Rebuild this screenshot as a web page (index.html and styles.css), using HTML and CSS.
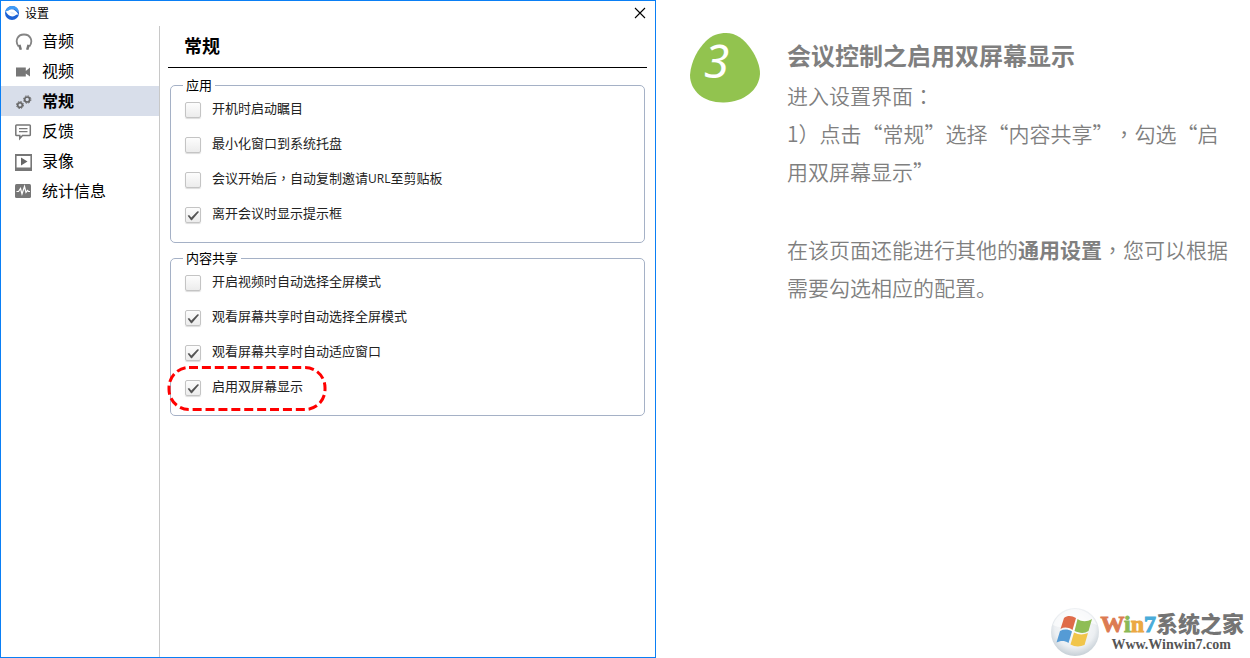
FILE: index.html
```html
<!DOCTYPE html>
<html lang="zh-CN">
<head>
<meta charset="utf-8">
<title>设置</title>
<link rel="stylesheet" href="styles.css">
</head>
<body>
<div class="page">
  <section class="window">
    <header class="titlebar">
      <svg class="app-icon" viewBox="0 0 14 14" aria-hidden="true">
        <circle cx="7" cy="7" r="7" fill="#1c62d6"/>
        <path d="M0.300 5.500C1 2.500 4 0 7.200 0 10 0 12.500 1.600 13.500 4.200L12.500 6C11 3.500 7.500 2 4.500 4 3 5 1.500 5.500 0.300 5.500Z" fill="#3f9bf5"/>
        <path d="M0.500 5C2 5.600 3.200 4.600 4.300 4 7.600 2.200 11 4.200 13.400 8.600 12.200 8.200 11 8.900 9.800 9.700 6.500 11.600 2.600 9.500 0.500 5Z" fill="#fff"/>
        <path d="M5 6C7.500 5.200 9.200 6.400 10.300 8.500 8 9.200 6 8.300 5 6Z" fill="#e4effc"/>
      </svg>
      <h1 class="window-title">设置</h1>
      <button class="close" type="button" aria-label="关闭">
        <svg viewBox="0 0 12 12" width="12" height="12"><path d="M1 1 11 11M11 1 1 11" stroke="#000" stroke-width="1.100" fill="none"/></svg>
      </button>
    </header>
    <div class="window-body">
      <nav class="sidebar">
        <a class="nav-item" href="#audio">
          <svg class="nav-icon" viewBox="0 0 18 18"><path d="M3.600 13.500C-0.500 8 2.500 1.500 9 1.500S18.500 8 14.400 13.500" fill="none" stroke="#858585" stroke-width="1.800"/><path d="M3 12.200 5.600 11.400 7 16.400 4.600 17ZM15 12.200 12.400 11.400 11 16.400 13.400 17Z" fill="#777"/></svg>
          <span>音频</span></a>
        <a class="nav-item" href="#video">
          <svg class="nav-icon" viewBox="0 0 18 18"><path d="M1 4.500H10.800V13.500H1ZM10.800 8 15 4.500V13.500L10.800 10.500Z" fill="#777"/></svg>
          <span>视频</span></a>
        <a class="nav-item active" href="#general" aria-current="page">
          <svg class="nav-icon" viewBox="0 0 18 18"><g fill="none" stroke="#666"><circle cx="5" cy="12" r="2.300" stroke-width="1.600"/><circle cx="5" cy="12" r="3.500" stroke-width="1" stroke-dasharray="1.600 1.150"/><circle cx="12.200" cy="6.500" r="2.500" stroke-width="1.700"/><circle cx="12.200" cy="6.500" r="3.700" stroke-width="1" stroke-dasharray="1.600 1.300"/></g></svg>
          <span>常规</span></a>
        <a class="nav-item" href="#feedback">
          <svg class="nav-icon" viewBox="0 0 18 18"><path d="M2 2H14.500Q15.300 2 15.300 2.800V11.700Q15.300 12.500 14.500 12.500H7.500L4.800 15.500V12.500H1.600Q0.800 12.500 0.800 11.700V2.800Q0.800 2 1.600 2Z" fill="none" stroke="#777" stroke-width="1.500"/><path d="M4 5.600H12.500M4 8.700H12.500" stroke="#777" stroke-width="1.300"/></svg>
          <span>反馈</span></a>
        <a class="nav-item" href="#record">
          <svg class="nav-icon" viewBox="0 0 18 18"><path d="M0 1H17V18H0ZM1.600 3V14.500H15.400V3Z" fill="#777" fill-rule="evenodd"/><path d="M6 4.500 12.500 8.500 6 12.500Z" fill="#666"/></svg>
          <span>录像</span></a>
        <a class="nav-item" href="#stats">
          <svg class="nav-icon" viewBox="0 0 18 18"><rect x="0" y="1" width="16" height="14" rx="1.500" fill="#777"/><path d="M1.500 8.500H3.500L5.500 5.500 7 11 9.500 3.500 11 9.500 12.500 7.500 13.500 8.500H15" fill="none" stroke="#fff" stroke-width="1.200"/></svg>
          <span>统计信息</span></a>
      </nav>
      <main class="settings">
        <h2 class="settings-title">常规</h2>
        <fieldset class="group">
          <legend>应用</legend>
          <label class="option"><input type="checkbox"><span class="caption">开机时启动瞩目</span></label>
          <label class="option"><input type="checkbox"><span class="caption">最小化窗口到系统托盘</span></label>
          <label class="option"><input type="checkbox"><span class="caption">会议开始后<span class="mid" lang="zh-TW">，</span>自动复制邀请<span class="abbr">URL</span>至剪贴板</span></label>
          <label class="option"><input type="checkbox" checked><span class="caption">离开会议时显示提示框</span></label>
        </fieldset>
        <fieldset class="group">
          <legend>内容共享</legend>
          <label class="option"><input type="checkbox"><span class="caption">开启视频时自动选择全屏模式</span></label>
          <label class="option"><input type="checkbox" checked><span class="caption">观看屏幕共享时自动选择全屏模式</span></label>
          <label class="option"><input type="checkbox" checked><span class="caption">观看屏幕共享时自动适应窗口</span></label>
          <label class="option"><input type="checkbox" checked><span class="caption">启用双屏幕显示</span>
            <svg class="callout" viewBox="0 0 160 47" aria-hidden="true"><rect x="2" y="2.500" width="156" height="42" rx="20" fill="none" stroke="#f00" stroke-width="3" stroke-dasharray="9 3.900"/></svg>
          </label>
        </fieldset>
      </main>
    </div>
  </section>

  <aside class="guide">
    <div class="step">
      <div class="badge">
        <svg class="blob" viewBox="0 0 70 70" aria-hidden="true"><path d="M36 0C46 0 54 6 61 16 67 25 70 33 70 41 69 57 54 69 34 69.500 14 70 0 58 0 42 1 28 8 16 16 8 22 2 29 0 36 0Z" fill="#92c34f"/></svg>
        <span class="number">3</span>
      </div>
      <article class="copy">
        <h2>会议控制之启用双屏幕显示</h2>
        <p>进入设置界面<span class="mid" lang="zh-TW">：</span><br>1）点击“常规”选择“内容共享”<span class="mid" lang="zh-TW">，</span>勾选“启用双屏幕显示”</p>
        <p>在该页面还能进行其他的<strong>通用设置</strong><span class="mid" lang="zh-TW">，</span>您可以根据需要勾选相应的配置。</p>
      </article>
    </div>
    <footer class="brand">
      <svg class="orb" viewBox="0 0 50 50" aria-hidden="true">
        <defs><radialGradient id="orb" cx=".5" cy=".4" r=".6"><stop offset="0" stop-color="#fff"/><stop offset=".7" stop-color="#eceff2"/><stop offset="1" stop-color="#c6cfd6"/></radialGradient></defs>
        <circle cx="25" cy="25" r="24" fill="url(#orb)"/>
        <path d="M3 18C8 5 20 2 25 2S42 5 47 18C34 12 16 25 3 18Z" fill="#fff" opacity=".6"/>
        <path d="M14 11C18 8 22 9 26 11L22.500 23C18 20 14 20 10.500 22Z" fill="#df6b49"/>
        <path d="M27.500 12C32 15 37 15 42 12L38.500 24C34 27 29 26 24.500 24Z" fill="#8fbd55"/>
        <path d="M10 24C14 22 18 22 22 24.500L18.500 36C14 33 10 34 6.500 35.500Z" fill="#559bd5"/>
        <path d="M24 25.500C29 28 33 28 38 26L34.500 38C30 40 25 40 20.500 37.500Z" fill="#f1c54b"/>
      </svg>
      <div class="brand-text">
        <div class="brand-name"><span class="latin"><span class="w">W</span><span class="i">i</span><span class="n">n</span><span class="seven">7</span></span>系统之家</div>
        <a class="brand-url" href="#home">Www.Winwin7.com</a>
      </div>
    </footer>
  </aside>
</div>
</body>
</html>
```
FILE: styles.css
```css
* { box-sizing: border-box; }

body {
  margin: 0;
  background: #fff;
  color: #000;
  font-family: "Noto Sans CJK SC", sans-serif;
  text-spacing-trim: space-all;
}

.page {
  display: grid;
  grid-template-columns: 656fr 594fr;
  min-height: 100vh;
}

.mid { font-family: "Noto Sans CJK TC", sans-serif; line-height: 1; }

.abbr { font-family: "Open Sans", sans-serif; font-size: 12px; }

/* Settings window */
.window {
  display: flex;
  flex-direction: column;
  border: 1px solid #0a7ff5;
}

.titlebar {
  display: flex;
  align-items: center;
  height: 25px;
  padding: 0 8px 2px 4px;
}

.app-icon { width: 14px; height: 14px; }

.window-title {
  margin: 0 auto 0 6px;
  font-size: 12px;
  font-weight: 400;
  line-height: 22px;
}

.close {
  display: flex;
  padding: 1px;
  border: 0;
  background: none;
}

.window-body { display: flex; flex: 1; }

.sidebar {
  flex: 0 0 159px;
  border-right: 1px solid #c8c8c8;
}

.nav-item {
  display: flex;
  align-items: center;
  gap: 9px;
  height: 30px;
  padding: 0 0 2px 14px;
  color: #000;
  font-size: 16px;
  line-height: 28px;
  text-decoration: none;
}

.nav-item.active { background: #d8deea; font-weight: 700; }

.nav-icon { width: 18px; height: 18px; margin-top: 4px; }

.settings { flex: 1; padding: 0 8px; }

.settings-title {
  margin: 0 0 8px;
  padding: 0 0 2px 16px;
  border-bottom: 1px solid #000;
  font-size: 18px;
  line-height: 39px;
}

.group {
  margin: 0 2px 6px;
  padding: 0 12px 11px;
  border: 1px solid #a5b1c6;
  border-radius: 5px;
}

.group legend {
  padding: 0 3px;
  font-size: 13px;
  line-height: 18px;
}

.option {
  position: relative;
  display: flex;
  align-items: center;
  gap: 11px;
  height: 32px;
  padding-left: 2px;
  color: #222;
  font-size: 13px;
}

.option + .option { margin-top: 3px; }

.caption { padding-bottom: 4px; line-height: 20px; }

.option input {
  width: 16px;
  height: 16px;
  margin: 0;
  appearance: none;
  border: 1px solid #c4c4c4;
  border-radius: 2px;
  background: linear-gradient(#fdfdfd, #ececec);
  box-shadow: 0 1px 1px #ddd;
}

.option input:checked::before {
  content: "";
  display: block;
  width: 14px;
  height: 14px;
  background: #555;
  clip-path: polygon(12% 56%, 22% 50%, 38% 68%, 82% 24%, 94% 27%, 42% 87%, 36% 87%);
}

.callout {
  position: absolute;
  top: -7px;
  left: -16px;
  width: 160px;
  height: 47px;
}

/* Step description */
.guide {
  display: flex;
  flex-direction: column;
  justify-content: space-between;
  padding: 33px 6px 1px 34px;
}

.step { display: flex; gap: 27px; padding-right: 10px; }

.badge { position: relative; flex: 0 0 70px; }

.blob { display: block; width: 70px; height: 70px; }

.number {
  position: absolute;
  top: 0;
  left: 14px;
  color: #fff;
  font: italic 46px/54px "Noto Sans", sans-serif;
}

.copy {
  flex: 1;
  padding-top: 3px;
  color: #7f7f7f;
  font-size: 21px;
  font-weight: 350;
  line-height: 38px;
}

.copy h2 { margin: 0 0 2px; font-size: 24px; }

.copy p { margin: 0 0 40px; }

.copy strong { font-weight: 700; line-height: 1; }

/* Site mark */
.brand { display: flex; align-self: flex-end; }

.orb { width: 50px; height: 50px; }

.brand-text { display: flex; flex-direction: column; }

.brand-name {
  color: #747474;
  font-size: 22px;
  font-weight: 900;
  line-height: 30px;
}

.latin {
  font-family: "Liberation Serif", serif;
  font-size: 24px;
  line-height: 1;
  -webkit-text-stroke: 1px;
}
.w { color: #dc7b52; }
.i { color: #8bb955; }
.n { color: #eba843; }
.seven { color: #4aacd9; }

.brand-url {
  padding-left: 11px;
  color: #555;
  font: bold 14px/16px "Liberation Serif", serif;
  text-decoration: none;
}
```
